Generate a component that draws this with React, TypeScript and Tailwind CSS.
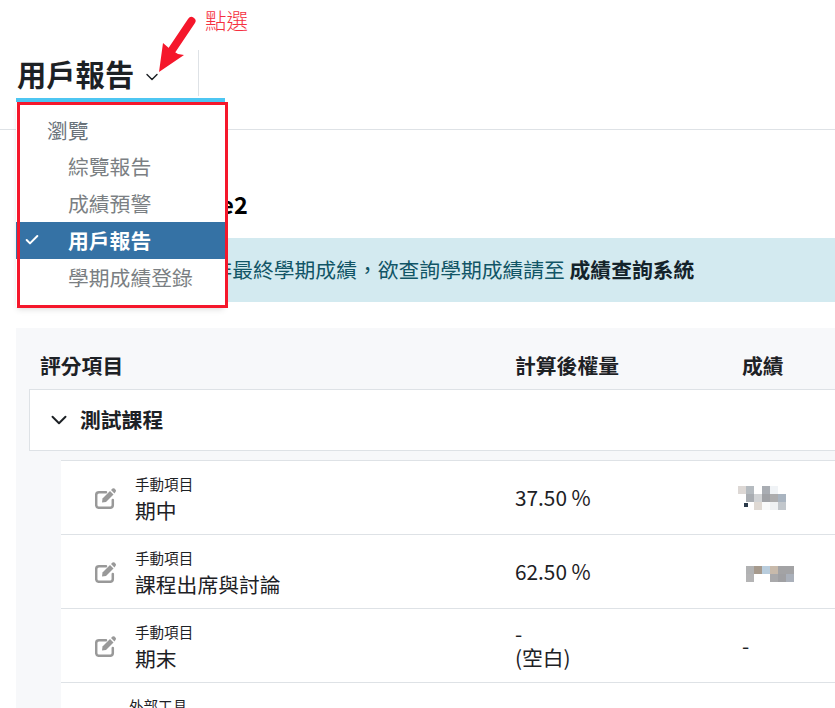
import { ChevronDown, Check } from 'lucide-react';

const font = '"Noto Sans CJK TC", "Noto Sans", sans-serif';

const menuItems = ['綜覽報告', '成績預警', '用戶報告', '學期成績登錄'];

function EditIcon() {
  return (
    <svg width="21" height="21" viewBox="0 0 21 21" className="block text-[#999999]">
      <path
        d="M11 4.2H4A2.8 2.8 0 0 0 1.2 7V17A2.8 2.8 0 0 0 4 19.8H15A2.8 2.8 0 0 0 17.8 17V12"
        fill="none"
        stroke="currentColor"
        strokeWidth="2.5"
        strokeLinecap="round"
      />
      <path d="M7.5 10.5L15 3L18.5 6.5L11 14L7 14.5Z" fill="currentColor" />
      <path d="M16 2L17.5 .6Q18.5 -.2 19.5 .6L20.6 1.7Q21.4 2.7 20.6 3.7L19.5 5.5Z" fill="currentColor" />
    </svg>
  );
}

function Mosaic({ blocks, children }: { blocks: [number, number, string][]; children?: React.ReactNode }) {
  return (
    <svg width="64" height="24" className="-ml-[5px] block">
      {children}
      {blocks.map(([x, y, c], i) => (
        <rect key={i} x={x * 8} y={y * 8} width="8" height="8" fill={c} />
      ))}
    </svg>
  );
}

function GradeRow({ type, name, weight, sub, grade }: { type: string; name: string; weight: string; sub?: string; grade: React.ReactNode }) {
  return (
    <div className="flex h-[74px] items-center border-t border-[#dee2e6] bg-white">
      <div className="flex h-full w-[454px]">
        <div className="ml-[34px] w-[40px] pt-[27px]">
          <EditIcon />
        </div>
        <div className="pt-[13px]">
          <div className="text-[14.56px] leading-[20px]">{type}</div>
          <div className="mt-[1px] text-[20.8px] leading-[30px]">{name}</div>
        </div>
      </div>
      <div className="w-[228px] pb-[2px] text-[20.8px] leading-[24px]">
        <div>{weight}</div>
        {sub && <div>{sub}</div>}
      </div>
      <div className="text-[20.8px]">{grade}</div>
    </div>
  );
}

export default function App() {
  return (
    <div className="relative h-[708px] w-[835px] overflow-hidden bg-white text-[#1d2125]" style={{ fontFamily: font }}>
      {/* top nav */}
      <div className="h-[130px] border-b border-[#dee2e6] pl-4 pt-[50px]">
        <div className="flex h-[52px] w-[209px] border-b-4 border-[#4dc6f2]">
          <div className="flex h-[46px] w-[183px] items-center justify-between border-r border-[#dee2e6] pl-[1px] pr-[36px]">
            <span className="text-[29.3px] font-semibold leading-[50px]">用戶報告</span>
            <ChevronDown size={20} strokeWidth={1.7} className="mt-[7px]" />
          </div>
        </div>
      </div>

      {/* page body */}
      <div className="pl-4 pt-[56px]">
        <h2 className="pl-[25px] text-[23.4px] font-semibold leading-[36px] text-black">測試課程 - Course2</h2>
        <div className="mt-[16px] flex h-[64px] items-center whitespace-nowrap bg-[#d3eaf0] pl-[29px] text-[20.8px] text-[#115566]">
          此處顯示之成績並非最終學期成績，欲查詢學期成績請至&nbsp;<b className="font-bold text-[#14232b]">成績查詢系統</b>
        </div>

        <div className="mt-[26px] bg-[#f7f8fa] pb-10">
          <div className="flex h-[61px] items-center pt-[15px] text-[20.8px] font-semibold">
            <div className="w-[499px] pl-[24px]">評分項目</div>
            <div className="w-[227px]">計算後權量</div>
            <div>成績</div>
          </div>
          <div className="ml-[13px] flex h-[62px] items-center border border-r-0 border-[#dee2e6] bg-white pl-[16px]">
            <ChevronDown size={26} strokeWidth={1.8} />
            <span className="ml-[8px] text-[20.8px] font-bold">測試課程</span>
          </div>
          <div className="ml-[45px] mt-[9px]">
            <GradeRow
              type="手動項目"
              name="期中"
              weight="37.50 %"
              grade={
                <Mosaic
                  blocks={[
                    [0, 0, '#ddd8d5'], [1, 0, '#b5bbc0'], [3, 0, '#a9adb3'], [4, 0, '#f0f3f6'],
                    [2, 1, '#d2d4d6'], [3, 1, '#a0a2a6'], [4, 1, '#adadae'], [5, 1, '#a9b4c0'],
                    [1, 1, '#a9adb2'], [3, 2, '#f9fafa'],
                    [2, 2, '#dfd9d3'], [4, 2, '#eff1f3'], [5, 2, '#c2c7cc'],
                  ]}
                >
                  <rect x="6" y="17" width="4" height="4" fill="#2b3a4a" />
                </Mosaic>
              }
            />
            <GradeRow
              type="手動項目"
              name="課程出席與討論"
              weight="62.50 %"
              grade={
                <Mosaic
                  blocks={[
                    [1, 0.75, '#b1b2b3'], [2, 0.75, '#a69a8d'], [3, 0.75, '#b9cddd'], [4, 0.75, '#c8baab'], [5, 0.75, '#a3a3a5'], [6, 0.75, '#a3a3a5'],
                    [1, 1.75, '#b4b4b5'], [4, 1.75, '#a9a9ab'], [5, 1.75, '#a0a0a3'], [6, 1.75, '#aab0ba'],
                  ]}
                />
              }
            />
            <GradeRow type="手動項目" name="期末" weight="-" sub="(空白)" grade={<span className="-ml-px">-</span>} />
            <div className="border-t border-[#dee2e6] bg-white pl-[68px] pt-[13px] text-[14.56px] leading-[20px]">外部工具</div>
          </div>
        </div>
      </div>

      {/* dropdown menu */}
      <div className="absolute left-4 top-[102px] h-[205px] w-[209px] bg-white pt-[10px] shadow-md">
        <div className="pl-[31px] text-[20.8px] leading-[36px] text-[#6a737b]">瀏覽</div>
        {menuItems.map((item) => {
          const active = item === '用戶報告';
          return (
            <div
              key={item}
              className={`relative h-[37px] pl-[52px] text-[20.8px] leading-[37px] ${active ? 'bg-[#3572a5] font-bold text-white' : 'text-[#7b7f83]'}`}
            >
              {active && <Check size={16} strokeWidth={3} className="absolute left-[8px] top-[10px]" />}
              {item}
            </div>
          );
        })}
      </div>

      {/* annotation */}
      <div className="absolute left-[17px] top-[102px] h-[206px] w-[211px] border-[3px] border-[#f5172b]" />
      <span className="absolute left-[205px] top-[5px] text-[21.5px] font-light leading-[30px] text-[#f5303f]">點選</span>
      <svg className="absolute left-[150px] top-[10px]" width="50" height="70" viewBox="0 0 50 70">
        <path d="M41.5 11 L22 40" stroke="#f5172b" strokeWidth="8" strokeLinecap="round" />
        <path d="M9 62 L13 33 L20 39 L28 44 L34 45 Z" fill="#f5172b" />
      </svg>
    </div>
  );
}
